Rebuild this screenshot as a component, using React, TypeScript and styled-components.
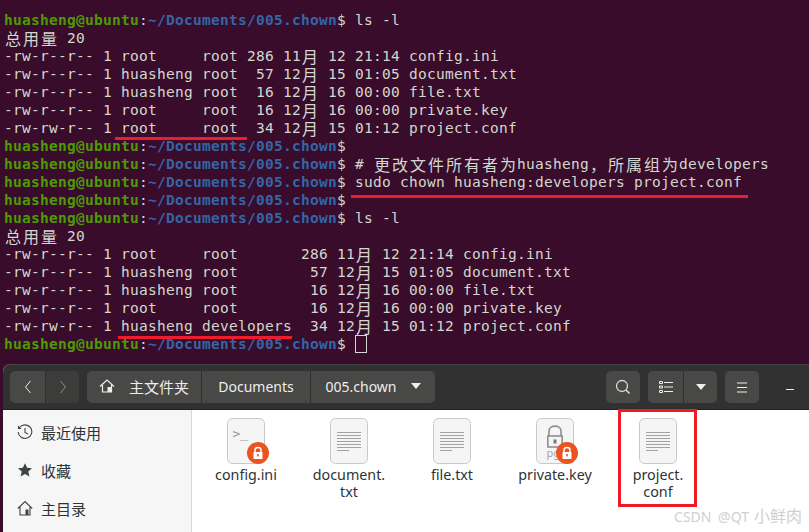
import styled, { createGlobalStyle } from "styled-components";

const GlobalStyle = createGlobalStyle`
  html, body {
    margin: 0;
    padding: 0;
    background: #380c2a;
  }
`

const Page = styled.div`
  position: relative;
  width: 809px;
  height: 532px;
  overflow: hidden;
  display: flex;
  flex-direction: column;
  background: #380c2a;
`

const Terminal = styled.div`
  height: 364px;
  flex: none;
  box-sizing: border-box;
  padding: 11px 0 0 4px;
  font-family: "DejaVu Sans Mono", monospace;
  font-size: 14.5px;
  letter-spacing: 0.27px;
  color: #d3d7cf;
`

const Line = styled.div`
  height: 18px;
  line-height: 18px;
  white-space: pre;
`

const User = styled.span`
  color: #4e9a06;
  font-weight: bold;
`

const Path = styled.span`
  color: #3465a4;
  font-weight: bold;
`

const Wide = styled.span`
  display: inline-block;
  width: 18px;
  text-align: center;
  letter-spacing: 0;
  font-family: "Noto Sans CJK SC", sans-serif;
  font-size: 16px;
  line-height: 18px;
  vertical-align: top;
`

const Cursor = styled.span`
  display: inline-block;
  box-sizing: border-box;
  width: 12px;
  height: 18px;
  border: 1px solid #d3d7cf;
  vertical-align: top;
`

const Underline = styled.div<{ $x: number; $y: number; $w: number }>`
  position: absolute;
  left: ${(p) => p.$x}px;
  top: ${(p) => p.$y}px;
  width: ${(p) => p.$w}px;
  height: 3px;
  background: #ed1c2e;
`

const RedBox = styled.div`
  position: absolute;
  left: 618px;
  top: 409px;
  width: 79px;
  height: 98px;
  box-sizing: border-box;
  border: 3px solid #ed1c24;
`

const Watermark = styled.div`
  position: absolute;
  right: 7px;
  top: 507px;
  font-family: "Noto Sans", "Noto Sans CJK SC", sans-serif;
  font-size: 14px;
  line-height: 18px;
  word-spacing: 3px;
  white-space: pre;
  color: #cfcfcf;
`

const WatermarkName = styled.span`
  font-size: 16px;
  margin-left: 5px;
`

const Window = styled.div`
  flex: 1;
  margin-left: 3px;
  display: flex;
  flex-direction: column;
  min-height: 0;
  border-radius: 8px 0 0 0;
  overflow: hidden;
  background: #fff;
  font-family: "Noto Sans", "Noto Sans CJK SC", sans-serif;
`

const Header = styled.div`
  height: 46px;
  flex: none;
  box-sizing: border-box;
  padding: 6px 0 0 7px;
  display: flex;
  align-items: flex-start;
  background: #313131;
  border-top: 1px solid #454545;
  border-bottom: 1px solid #1f1f1f;
`

const ButtonGroup = styled.div<{ $gapLeft?: number }>`
  display: flex;
  height: 32px;
  margin-left: ${(p) => p.$gapLeft ?? 0}px;
  border-radius: 5px;
  overflow: hidden;
  background: #484846;
  flex: none;
`

const NavButton = styled.div<{ $w: number; $bg?: string }>`
  width: ${(p) => p.$w}px;
  height: 32px;
  box-sizing: border-box;
  display: flex;
  align-items: center;
  justify-content: center;
  background: ${(p) => p.$bg ?? "transparent"};
  & + & {
    border-left: 1px solid #303030;
  }
`

const Crumb = styled.div<{ $w: number }>`
  width: ${(p) => p.$w}px;
  height: 32px;
  box-sizing: border-box;
  padding-bottom: 2px;
  display: flex;
  align-items: center;
  justify-content: center;
  gap: 14px;
  color: #eeeeec;
  font-size: 14px;
  white-space: nowrap;
  & + & {
    border-left: 1px solid #303030;
  }
`

const HomeLabel = styled.span`
  font-size: 15px;
`

const Minimize = styled.div`
  width: 8px;
  height: 1px;
  background: #eeeeec;
  margin: 18px 0 0 27px;
  flex: none;
`

const Body = styled.div`
  flex: 1;
  display: flex;
  min-height: 0;
`

const Sidebar = styled.div`
  width: 189px;
  flex: none;
  box-sizing: border-box;
  padding-top: 3px;
  background: #f6f6f6;
  border-right: 1px solid #d9d9d9;
`

const SideItem = styled.div`
  height: 38px;
  display: flex;
  align-items: center;
  gap: 8px;
  padding-left: 14px;
  font-size: 15px;
  color: #2e3436;
`

const SideIcon = styled.svg`
  width: 16px;
  height: 16px;
  flex: none;
`

const Files = styled.div`
  flex: 1;
  display: flex;
  padding: 8px 0 0 2.5px;
`

const FileItem = styled.div`
  width: 103px;
  flex: none;
  display: flex;
  flex-direction: column;
  align-items: center;
`

const IconWrap = styled.div`
  position: relative;
  width: 38px;
  height: 46px;
`

const Badge = styled.svg`
  position: absolute;
  right: -4px;
  bottom: 0;
  width: 22px;
  height: 22px;
`

const FileName = styled.div`
  width: 90px;
  margin-top: 2px;
  font-size: 14.3px;
  line-height: 17px;
  text-align: center;
  color: #2e3436;
`

const Prompt = ({ children }: { children?: React.ReactNode }) => (
  <Line>
    <User>huasheng@ubuntu</User>:<Path>~/Documents/005.chown</Path>$ {children}
  </Line>
)

// CJK characters take two terminal cells
const cells = (text: string) =>
  text.split(/([\u3000-\u9fff\uff00-\uffef])/).map((part, i) =>
    i % 2 === 1 ? <Wide key={i}>{part}</Wide> : part
  )

const firstList = [
  "-rw-r--r-- 1 root     root 286 11月 12 21:14 config.ini",
  "-rw-r--r-- 1 huasheng root  57 12月 15 01:05 document.txt",
  "-rw-r--r-- 1 huasheng root  16 12月 16 00:00 file.txt",
  "-rw-r--r-- 1 root     root  16 12月 16 00:00 private.key",
  "-rw-rw-r-- 1 root     root  34 12月 15 01:12 project.conf",
]

const secondList = [
  "-rw-r--r-- 1 root     root       286 11月 12 21:14 config.ini",
  "-rw-r--r-- 1 huasheng root        57 12月 15 01:05 document.txt",
  "-rw-r--r-- 1 huasheng root        16 12月 16 00:00 file.txt",
  "-rw-r--r-- 1 root     root        16 12月 16 00:00 private.key",
  "-rw-rw-r-- 1 huasheng developers  34 12月 15 01:12 project.conf",
]

const DocPage = () => (
  <svg width="38" height="46" viewBox="0 0 38 46">
    <rect x="0.5" y="0.5" width="37" height="45" rx="5" fill="#f5f5f5" stroke="#c8c8c8" />
    <path
      d="M7 14.5H31M7 17.5H31M7 20.5H31M7 23.5H31M7 26.5H31M7 29.5H31M7 32.5H19"
      stroke="#a2a2a2"
      fill="none"
    />
  </svg>
)

const ScriptPage = () => (
  <svg width="38" height="46" viewBox="0 0 38 46">
    <rect x="0.5" y="0.5" width="37" height="45" rx="5" fill="#f5f5f5" stroke="#c8c8c8" />
    <text x="5.5" y="20" fontFamily="DejaVu Sans Mono" fontSize="13" fill="#999">
      &gt;_
    </text>
  </svg>
)

const KeyPage = () => (
  <svg width="38" height="46" viewBox="0 0 38 46">
    <rect x="0.5" y="0.5" width="37" height="45" rx="5" fill="#f5f5f5" stroke="#c8c8c8" />
    <path d="M13 18V13C13 6.5 25 6.5 25 13V18" stroke="#8f8f8f" strokeWidth="1.6" fill="none" />
    <rect x="11.8" y="18" width="14.4" height="11" fill="none" stroke="#8f8f8f" strokeWidth="1.6" />
    <rect x="17.5" y="21.5" width="3" height="4" fill="#777" />
    <text x="10.5" y="39" fontFamily="Noto Sans" fontSize="11" fill="#a5a5a5">
      pgp
    </text>
  </svg>
)

const LockBadge = () => (
  <Badge viewBox="0 0 22 22">
    <circle cx="11" cy="11" r="11" fill="#e95420" />
    <path d="M8 10V8C8 4.6 14 4.6 14 8V10" stroke="#fff" strokeWidth="1.5" fill="none" />
    <rect x="6.5" y="10" width="9" height="7" rx="0.5" fill="#fff" />
    <rect x="10.2" y="12" width="1.6" height="2.4" fill="#e95420" />
  </Badge>
)

const files = [
  { name: "config.ini", icon: <ScriptPage />, locked: true },
  { name: "document.\ntxt", icon: <DocPage />, locked: false },
  { name: "file.txt", icon: <DocPage />, locked: false },
  { name: "private.key", icon: <KeyPage />, locked: true },
  { name: "project.\nconf", icon: <DocPage />, locked: false },
]

export default function App() {
  return (
    <Page>
      <GlobalStyle />
      <Terminal>
        <Prompt>ls -l</Prompt>
        <Line>{cells("总用量 20")}</Line>
        {firstList.map((row) => (
          <Line key={row}>{cells(row)}</Line>
        ))}
        <Prompt />
        <Prompt>{cells("# 更改文件所有者为huasheng，所属组为developers")}</Prompt>
        <Prompt>sudo chown huasheng:developers project.conf</Prompt>
        <Prompt />
        <Prompt>ls -l</Prompt>
        <Line>{cells("总用量 20")}</Line>
        {secondList.map((row) => (
          <Line key={row}>{cells(row)}</Line>
        ))}
        <Prompt>
          <Cursor />
        </Prompt>
      </Terminal>
      <Window>
        <Header>
          <ButtonGroup>
            <NavButton $w={35}>
              <svg width="10" height="16" viewBox="0 0 10 16">
                <path d="M7.5 2L2.5 8L7.5 14" stroke="#eeeeec" fill="none" />
              </svg>
            </NavButton>
            <NavButton $w={34} $bg="#3c3c3b">
              <svg width="10" height="16" viewBox="0 0 10 16">
                <path d="M2.5 2L7.5 8L2.5 14" stroke="#8c8c8b" fill="none" />
              </svg>
            </NavButton>
          </ButtonGroup>
          <ButtonGroup $gapLeft={8}>
            <Crumb $w={114}>
              <svg width="16" height="16" viewBox="0 0 16 16">
                <path d="M1 8.5L8 2L15 8.5M3.5 7V14H12.5V7" stroke="#eeeeec" strokeWidth="1.2" fill="none" />
                <rect x="8.5" y="9" width="3.5" height="5" fill="#eeeeec" />
              </svg>
              <HomeLabel>主文件夹</HomeLabel>
            </Crumb>
            <Crumb $w={109}>Documents</Crumb>
            <Crumb $w={125}>
              <span>005.chown</span>
              <svg width="10" height="6" viewBox="0 0 10 6">
                <path d="M0 0H10L5 6Z" fill="#eeeeec" />
              </svg>
            </Crumb>
          </ButtonGroup>
          <ButtonGroup $gapLeft={171}>
            <NavButton $w={34}>
              <svg width="16" height="16" viewBox="0 0 16 16">
                <circle cx="7" cy="7" r="5.5" stroke="#d8d8d6" strokeWidth="1.3" fill="none" />
                <path d="M11 11L14.5 14.5" stroke="#d8d8d6" strokeWidth="1.6" />
              </svg>
            </NavButton>
          </ButtonGroup>
          <ButtonGroup $gapLeft={8}>
            <NavButton $w={35}>
              <svg width="14" height="12" viewBox="0 0 14 12">
                <path d="M5 1.5H14M5 6H14M5 10.5H14" stroke="#eeeeec" />
                <path d="M0.5 0.5H3.5V2.5H0.5ZM0.5 5H3.5V7H0.5ZM0.5 9.5H3.5V11.5H0.5Z" stroke="#eeeeec" fill="none" />
              </svg>
            </NavButton>
            <NavButton $w={34}>
              <svg width="10" height="6" viewBox="0 0 10 6">
                <path d="M0 0H10L5 6Z" fill="#eeeeec" />
              </svg>
            </NavButton>
          </ButtonGroup>
          <ButtonGroup $gapLeft={8}>
            <NavButton $w={34}>
              <svg width="12" height="11" viewBox="0 0 12 11">
                <path d="M1 1H11M1 5.5H11M1 10H11" stroke="#eeeeec" />
              </svg>
            </NavButton>
          </ButtonGroup>
          <Minimize />
        </Header>
        <Body>
          <Sidebar>
            <SideItem>
              <SideIcon viewBox="0 0 16 16">
                <path d="M2.6 3.5A6.8 6.8 0 1 1 1.2 8" stroke="#3f4446" strokeWidth="1.1" fill="none" />
                <path d="M1 1.5V5H4.5Z" fill="#3f4446" />
                <path d="M8 4V8.5L11 10" stroke="#3f4446" strokeWidth="1.1" fill="none" />
              </SideIcon>
              最近使用
            </SideItem>
            <SideItem>
              <SideIcon viewBox="0 0 16 16">
                <path d="M8 1.2L10.1 5.8L15 6.3L11.3 9.6L12.4 14.6L8 12L3.6 14.6L4.7 9.6L1 6.3L5.9 5.8Z" fill="#3f4446" />
              </SideIcon>
              收藏
            </SideItem>
            <SideItem>
              <SideIcon viewBox="0 0 16 16">
                <path d="M0.8 8.5L8 1.5L15.2 8.5M3 7V15H13V7" stroke="#3f4446" strokeWidth="1.1" fill="none" />
                <rect x="8.5" y="9.5" width="3" height="5.5" fill="#3f4446" />
              </SideIcon>
              主目录
            </SideItem>
          </Sidebar>
          <Files>
            {files.map((f) => (
              <FileItem key={f.name}>
                <IconWrap>
                  {f.icon}
                  {f.locked && <LockBadge />}
                </IconWrap>
                <FileName>
                  {f.name.split("\n").map((part) => (
                    <div key={part}>{part}</div>
                  ))}
                </FileName>
              </FileItem>
            ))}
          </Files>
        </Body>
      </Window>
      <Underline $x={115} $y={137} $w={132} />
      <Underline $x={351} $y={195} $w={397} />
      <Underline $x={118} $y={336} $w={174} />
      <RedBox />
      <Watermark>
        CSDN @QT<WatermarkName>小鲜肉</WatermarkName>
      </Watermark>
    </Page>
  )
}
